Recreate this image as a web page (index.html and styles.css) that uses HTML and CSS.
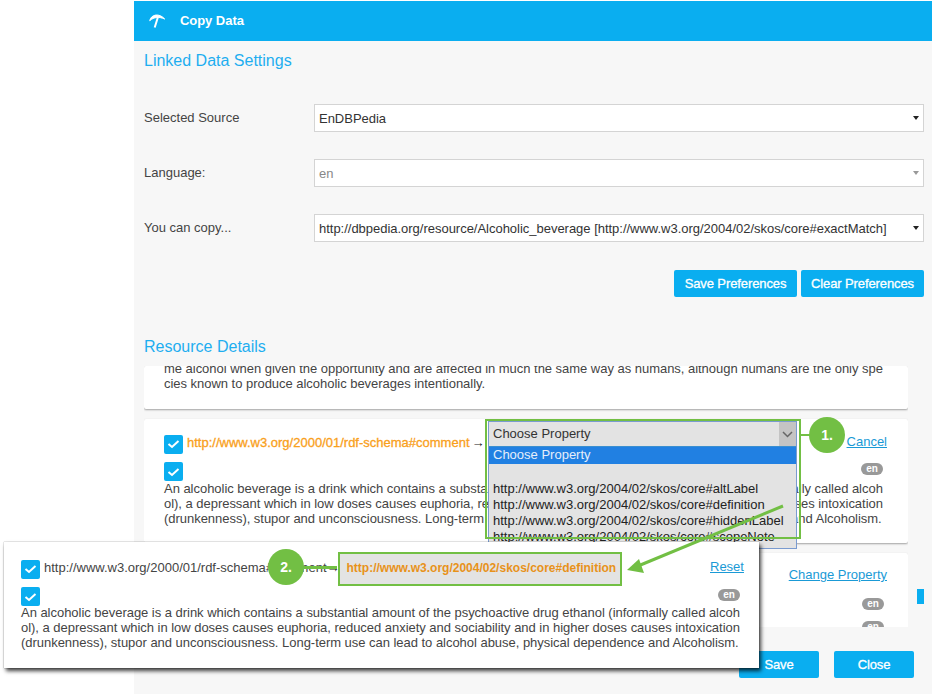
FILE: index.html
```html
<!DOCTYPE html>
<html lang="en">

<head>
    <meta charset="UTF-8">
    <title>Copy Data</title>
    <link rel="stylesheet" href="styles.css">
</head>

<body>

    <div class="dialog">
        <div class="dialog-header">
            <svg class="pick-icon" width="18" height="18" viewBox="0 0 18 18">
                <path d="M1.7 8.7C3 2.5 11 .5 16.7 7C11 4.5 6 5 1.7 8.7Z" fill="#fff" stroke="#fff" stroke-width="1" stroke-linejoin="round" />
                <path d="M10 5L6.7 15.5" fill="none" stroke="#fff" stroke-width="2" />
            </svg>
            <span class="dialog-title">Copy Data</span>
        </div>

        <div class="dialog-body">
            <h2 class="section-title settings-title">Linked Data Settings</h2>

            <div class="form-row">
                <label class="form-label">Selected Source</label>
                <div class="select-box"><span>EnDBPedia</span><i class="caret"></i></div>
            </div>
            <div class="form-row">
                <label class="form-label">Language:</label>
                <div class="select-box disabled"><span>en</span><i class="caret"></i></div>
            </div>
            <div class="form-row">
                <label class="form-label">You can copy...</label>
                <div class="select-box"><span>http://dbpedia.org/resource/Alcoholic_beverage [http://www.w3.org/2004/02/skos/core#exactMatch]</span><i class="caret"></i></div>
            </div>

            <div class="pref-buttons">
                <div class="button pref-save">Save Preferences</div>
                <div class="button pref-clear">Clear Preferences</div>
            </div>

            <h2 class="section-title details-title">Resource Details</h2>

            <div class="scroll-wrap">
                <div class="scroll-area">
                    <div class="card card-first">
                        <p class="card-text">me alcohol when given the opportunity and are affected in much the same way as humans, although humans are the only species known to produce alcoholic beverages intentionally.</p>
                    </div>

                    <div class="card card-second">
                        <div class="prop-row">
                            <span class="check"><svg width="13" height="10" viewBox="0 0 13 10"><path d="M1.5 5L5 8L11.5 2" fill="none" stroke="#fff" stroke-width="2" /></svg></span>
                            <span class="prop-link">http://www.w3.org/2000/01/rdf-schema#comment</span>
                            <span class="arrow">→</span>
                            <a class="card-action cancel-link">Cancel</a>
                        </div>
                        <div class="lang-row">
                            <span class="check"><svg width="13" height="10" viewBox="0 0 13 10"><path d="M1.5 5L5 8L11.5 2" fill="none" stroke="#fff" stroke-width="2" /></svg></span>
                            <span class="lang-tag">en</span>
                        </div>
                        <p class="card-text">An alcoholic beverage is a drink which contains a substantial amount of the psychoactive drug ethanol (informally called alcohol), a depressant which in low doses causes euphoria, reduced anxiety and sociability and in higher doses causes intoxication (drunkenness), stupor and unconsciousness. Long-term use can lead to alcohol abuse, physical dependence and Alcoholism.</p>
                    </div>

                    <div class="card card-third">
                        <a class="card-action change-link">Change Property</a>
                        <div class="third-tags">
                            <span class="lang-tag">en</span>
                            <span class="lang-tag">en</span>
                        </div>
                    </div>
                </div>
                <div class="scroll-thumb"></div>
            </div>

            <div class="footer-buttons">
                <div class="button footer-button">Save</div>
                <div class="button footer-button">Close</div>
            </div>
        </div>
    </div>

    <!-- annotations on top of the screenshot -->
    <div class="dropdown">
        <div class="dropdown-head">
            <span class="dropdown-label">Choose Property</span>
            <span class="dropdown-toggle"><svg width="11" height="7" viewBox="0 0 11 7"><path d="M1 1L5.5 5.5L10 1" fill="none" stroke="#666" stroke-width="1.5" /></svg></span>
        </div>
        <div class="dropdown-list">
            <div class="dropdown-item selected">Choose Property</div>
            <div class="dropdown-item blank"></div>
            <div class="dropdown-item">http://www.w3.org/2004/02/skos/core#altLabel</div>
            <div class="dropdown-item">http://www.w3.org/2004/02/skos/core#definition</div>
            <div class="dropdown-item">http://www.w3.org/2004/02/skos/core#hiddenLabel</div>
            <div class="dropdown-item">http://www.w3.org/2004/02/skos/core#scopeNote</div>
        </div>
    </div>
    <div class="green-box dropdown-frame"></div>
    <div class="step step-one">1.</div>
    <div class="green-line line-one"></div>

    <div class="callout">
        <div class="prop-row">
            <span class="check"><svg width="13" height="10" viewBox="0 0 13 10"><path d="M1.5 5L5 8L11.5 2" fill="none" stroke="#fff" stroke-width="2" /></svg></span>
            <span class="callout-prop">http://www.w3.org/2000/01/rdf-schema#comment</span>
            <span class="arrow callout-arrow">→</span>
            <span class="green-box callout-value">http://www.w3.org/2004/02/skos/core#definition</span>
            <a class="card-action reset-link">Reset</a>
        </div>
        <div class="lang-row">
            <span class="check"><svg width="13" height="10" viewBox="0 0 13 10"><path d="M1.5 5L5 8L11.5 2" fill="none" stroke="#fff" stroke-width="2" /></svg></span>
            <span class="lang-tag">en</span>
        </div>
        <p class="card-text">An alcoholic beverage is a drink which contains a substantial amount of the psychoactive drug ethanol (informally called alcohol), a depressant which in low doses causes euphoria, reduced anxiety and sociability and in higher doses causes intoxication (drunkenness), stupor and unconsciousness. Long-term use can lead to alcohol abuse, physical dependence and Alcoholism.</p>
    </div>
    <div class="green-line line-two"></div>
    <div class="step step-two">2.</div>

    <svg class="pointer" width="934" height="694" viewBox="0 0 934 694">
        <path d="M783 506L638 566" fill="none" stroke="#72bf44" stroke-width="3" />
        <path d="M627 570L639 559L644 573Z" fill="#72bf44" />
    </svg>

</body>

</html>
```

FILE: styles.css
```css
html, body {
    margin: 0;
    height: 694px;
    overflow: hidden;
}

body {
    position: relative;
    background-color: #fff;
    font-family: 'Liberation Sans', Arial, sans-serif;
    font-size: 13px;
    color: #444;
}

.dialog {
    margin: 1px 2px 0 134px;
    height: 693px;
    background-color: #f7f7f7;
}

.dialog-header {
    display: flex;
    align-items: center;
    height: 40px;
    background-color: #0aaef0;
}

.pick-icon {
    margin-left: 14px;
}

.dialog-title {
    margin-left: 14px;
    margin-bottom: 1px;
    font-weight: bold;
    letter-spacing: -0.05px;
    color: #fff;
}

.dialog-body {
    padding: 0 8px 0 10px;
}

.section-title {
    margin: 0;
    font-size: 16px;
    font-weight: normal;
    line-height: 20px;
    color: #1eaef0;
}

.settings-title {
    padding-top: 10px;
    margin-bottom: 33px;
}

.form-row {
    display: flex;
    align-items: center;
    height: 28px;
    margin-bottom: 27px;
}

.form-label {
    width: 170px;
    flex: none;
    padding-bottom: 2px;
    color: #444;
}

.select-box {
    display: flex;
    align-items: center;
    justify-content: space-between;
    box-sizing: border-box;
    width: 610px;
    height: 28px;
    padding: 0 4px;
    background-color: #fff;
    border: 1px solid #d4d4d4;
    letter-spacing: -0.02px;
    color: #333;
}

.select-box.disabled {
    color: #888;
}

.select-box.disabled .caret {
    border-top-color: #999;
}

.caret {
    width: 0;
    height: 0;
    border-left: 3px solid transparent;
    border-right: 3px solid transparent;
    border-top: 4px solid #222;
}

.pref-buttons {
    display: flex;
    justify-content: flex-end;
    gap: 4px;
    margin-top: 28px;
}

.button {
    display: flex;
    align-items: center;
    justify-content: center;
    background-color: #0aaef0;
    border-radius: 2px;
    color: #fff;
    letter-spacing: -0.1px;
    -webkit-text-stroke: 0.3px #fff;
}

.pref-save {
    width: 123px;
    height: 27px;
}

.pref-clear {
    width: 123px;
    height: 27px;
}

.details-title {
    margin-top: 40px;
}

.scroll-wrap {
    position: relative;
    height: 261px;
    margin-top: 9px;
}

.scroll-area {
    width: 764px;
    height: 261px;
    overflow: hidden;
}

.scroll-thumb {
    position: absolute;
    top: 223px;
    left: 773px;
    width: 7px;
    height: 15px;
    background-color: #0aaef0;
}

.card {
    box-sizing: border-box;
    background-color: #fff;
    border-radius: 2px;
    box-shadow: 0 1px 2px rgba(0, 0, 0, 0.35);
    padding: 0 23px 0 20px;
    margin-bottom: 10px;
}

.card-first {
    height: 43px;
    overflow: hidden;
}

.card-second {
    height: 124px;
    padding-top: 15px;
}

.card-third {
    position: relative;
    height: 90px;
}

.card-text {
    margin: 0;
    line-height: 15px;
    letter-spacing: -0.03px;
    word-break: break-all;
    color: #444;
}

.card-first .card-text {
    margin-top: -5px;
}

.prop-row {
    position: relative;
    display: flex;
    align-items: center;
    height: 20px;
}

.check {
    display: flex;
    align-items: center;
    justify-content: center;
    width: 19px;
    height: 19px;
    flex: none;
    background-color: #0aaef0;
    border-radius: 2px;
}

.prop-link {
    margin-left: 4px;
    padding-bottom: 3px;
    color: #f9a01b;
    -webkit-text-stroke: 0.3px #f9a01b;
}

.arrow {
    margin-left: 2px;
    padding-bottom: 3px;
    color: #222;
}

.callout-arrow {
    width: 11px;
    margin-left: 0;
    flex: none;
}

.card-action {
    position: absolute;
    color: #1a9ad6;
    text-decoration: underline;
}

.cancel-link {
    top: 0;
    right: -2px;
}

.change-link {
    top: 14px;
    right: 21px;
}

.reset-link {
    top: 0;
    left: 689px;
}

.lang-row {
    position: relative;
    margin-top: 8px;
    height: 19px;
}

.lang-tag {
    display: block;
    width: 22px;
    height: 12px;
    border-radius: 6px;
    background-color: #999;
    color: #fff;
    font-size: 10px;
    font-weight: bold;
    line-height: 12px;
    text-align: center;
}

.lang-row .lang-tag {
    position: absolute;
    top: 1px;
    right: 2px;
}

.third-tags {
    position: absolute;
    top: 45px;
    right: 24px;
    display: flex;
    flex-direction: column;
    gap: 11px;
}

.footer-buttons {
    display: flex;
    justify-content: flex-end;
    gap: 15px;
    margin-top: 24px;
    padding-right: 10px;
}

.footer-button {
    width: 80px;
    height: 27px;
}

/* annotations */

.dropdown {
    position: absolute;
    top: 421px;
    left: 488px;
    width: 309px;
    box-sizing: border-box;
    border: 1px solid #7a9bd0;
    background-color: #e3e3e3;
    color: #222;
}

.dropdown-head {
    display: flex;
    align-items: center;
    justify-content: space-between;
    height: 24px;
    padding-left: 4px;
    border-bottom: 1px solid #3a8fd0;
    color: #333;
}

.dropdown-label {
    padding-bottom: 2px;
}

.dropdown-toggle {
    display: flex;
    align-items: center;
    justify-content: center;
    width: 17px;
    height: 24px;
    background-color: #c4c4c4;
}

.dropdown-list {
    height: 101px;
    overflow: hidden;
}

.dropdown-item {
    height: 16px;
    padding-left: 4px;
    line-height: 16px;
}

.dropdown-item.selected {
    height: 17px;
    line-height: 15px;
    background-color: #2180e2;
    color: #e6eefa;
}

.dropdown-item.blank {
    height: 17px;
}

.green-box {
    box-sizing: border-box;
    border: 2px solid #72bf44;
}

.dropdown-frame {
    position: absolute;
    top: 419px;
    left: 485px;
    width: 316px;
    height: 120px;
}

.step {
    position: absolute;
    display: flex;
    align-items: center;
    justify-content: center;
    width: 36px;
    height: 36px;
    border-radius: 50%;
    background-color: #72bf44;
    color: #fff;
    font-size: 14px;
    font-weight: bold;
}

.step-one {
    top: 417px;
    left: 809px;
}

.step-two {
    top: 549px;
    left: 268px;
}

.green-line {
    position: absolute;
    height: 2px;
    background-color: #72bf44;
}

.line-one {
    top: 434px;
    left: 801px;
    width: 9px;
}

.line-two {
    top: 566px;
    left: 304px;
    width: 33px;
    height: 3px;
}

.callout {
    position: absolute;
    top: 542px;
    left: 4px;
    box-sizing: border-box;
    width: 755px;
    height: 126px;
    padding: 17px 17px 0 17px;
    background-color: #fff;
    box-shadow: 2px 3px 4px rgba(0, 0, 0, 0.75), 0 0 1px rgba(0, 0, 0, 0.5);
}

.callout .lang-row {
    height: 18px;
}

.callout .lang-tag {
    top: 2px;
}

.callout-prop {
    margin-left: 4px;
    padding-bottom: 3px;
    color: #444;
}

.callout-value {
    display: flex;
    align-items: center;
    flex: none;
    width: 284px;
    height: 34px;
    padding: 0 0 2px 7px;
    background-color: #e3e3e3;
    font-size: 12px;
    font-weight: bold;
    color: #e8921a;
}

.pointer {
    position: absolute;
    top: 0;
    left: 0;
}
```
